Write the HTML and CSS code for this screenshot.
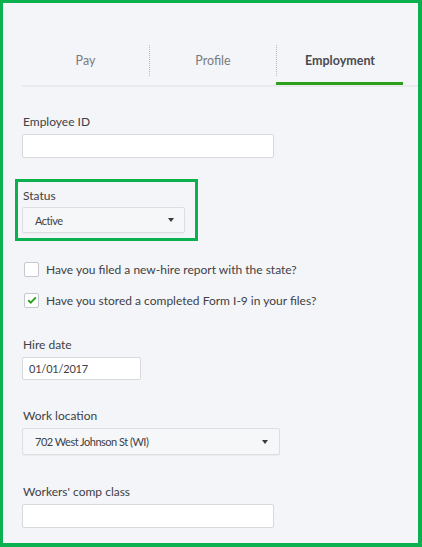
FILE: index.html
```html
<!DOCTYPE html>
<html>
<head>
<meta charset="utf-8">
<link rel="stylesheet" href="styles.css">
</head>
<body>
<div class="frame">
  <div class="tabbar">
    <div class="tab"><span class="tab-label">Pay</span></div>
    <div class="tab"><span class="tab-label divided">Profile</span></div>
    <div class="tab active"><span class="tab-label divided">Employment</span></div>
  </div>
  <div class="form">
    <div class="field first">
      <div class="label">Employee ID</div>
      <div class="input wide"></div>
    </div>
    <div class="highlight">
      <div class="label">Status</div>
      <div class="select status-select"><span>Active</span><span class="caret"></span></div>
    </div>
    <div class="checks">
      <div class="check-row"><span class="box"></span><span class="check-text">Have you filed a new-hire report with the state?</span></div>
      <div class="check-row"><span class="box checked"><svg width="10" height="8" viewBox="0 0 10 8"><path d="M1.2 4.2 L3.8 6.6 L8.8 1.3" fill="none" stroke="#2ca01c" stroke-width="1.9"/></svg></span><span class="check-text">Have you stored a completed Form I-9 in your files?</span></div>
    </div>
    <div class="field hire">
      <div class="label">Hire date</div>
      <div class="input date">01/01/2017</div>
    </div>
    <div class="field loc">
      <div class="label">Work location</div>
      <div class="select loc-select"><span>702 West Johnson St (WI)</span><span class="caret"></span></div>
    </div>
    <div class="field comp">
      <div class="label">Workers' comp class</div>
      <div class="input wide"></div>
    </div>
  </div>
</div>
</body>
</html>
```
FILE: styles.css
```css
* { box-sizing: border-box; }
html, body { margin: 0; padding: 0; }
body {
  font-family: Lato, "Open Sans", Arial, sans-serif;
  color: #404145;
  background: #ffffff;
}
.frame {
  width: 422px;
  height: 547px;
  background: #f4f5f8;
  border-style: solid;
  border-color: #0bb04f;
  border-width: 3px 4px 4px 3px;
  overflow: hidden;
}
.tabbar {
  margin-top: 42px;
  margin-left: 19px;
  display: flex;
  border-bottom: 2px solid #e9eaed;
}
.tab {
  width: 127px;
  height: 40px;
  font-size: 12.5px;
  color: #7a7b80;
  border-bottom: 3px solid transparent;
}
.tab.active {
  border-bottom-color: #2ca01c;
  color: #4a4b4f;
  font-weight: 700;
}
.tab-label {
  display: block;
  height: 31px;
  line-height: 31px;
  text-align: center;
}
.tab-label.divided {
  border-left: 1px dotted #b9babd;
}
.form {
  padding-left: 19px;
}
.label {
  font-size: 12px;
  line-height: 16px;
  height: 16px;
  margin-left: 1px;
}
.input {
  background: #ffffff;
  border: 1px solid #d7d9dd;
  border-radius: 2px;
  height: 24px;
  margin-top: 4px;
  font-size: 11px;
  line-height: 22px;
  padding-left: 6px;
  letter-spacing: -0.2px;
}
.input.wide { width: 252px; }
.input.date { width: 119px; height: 23px; margin-top: 4px; }
.field.first { padding-top: 27px; }
.highlight {
  margin-top: 21px;
  margin-left: -7px;
  width: 183px;
  border: 3px solid #0bb04f;
  padding: 6px 0 5px 4px;
}
.highlight .label { margin-left: 1px; }
.select {
  display: flex;
  align-items: center;
  justify-content: space-between;
  background: #f6f7f9;
  border: 1px solid #dcdee2;
  border-radius: 2px;
  box-shadow: 0 1px 1px rgba(0,0,0,0.04);
  font-size: 11px;
  letter-spacing: -0.5px;
  padding: 0 10px 0 12px;
  margin-top: 3px;
}
.status-select { width: 163px; height: 26px; }
.loc-select { width: 258px; height: 27px; margin-top: 4px; padding-right: 11px; }
.caret {
  width: 0;
  height: 0;
  border-left: 3.5px solid transparent;
  border-right: 3.5px solid transparent;
  border-top: 4px solid #393a3d;
}
.checks {
  margin-top: 20px;
  margin-left: 2px;
  display: flex;
  flex-direction: column;
  gap: 15px;
}
.check-row {
  display: flex;
  align-items: center;
  height: 16px;
  font-size: 12px;
}
.box {
  width: 15px;
  height: 15px;
  background: #ffffff;
  border: 1px solid #c5c7cc;
  border-radius: 2px;
  display: flex;
  align-items: center;
  justify-content: center;
}
.check-text { margin-left: 7px; }
.field.hire { margin-top: 29px; }
.field.loc { margin-top: 28px; }
.field.comp { margin-top: 29px; }
```
